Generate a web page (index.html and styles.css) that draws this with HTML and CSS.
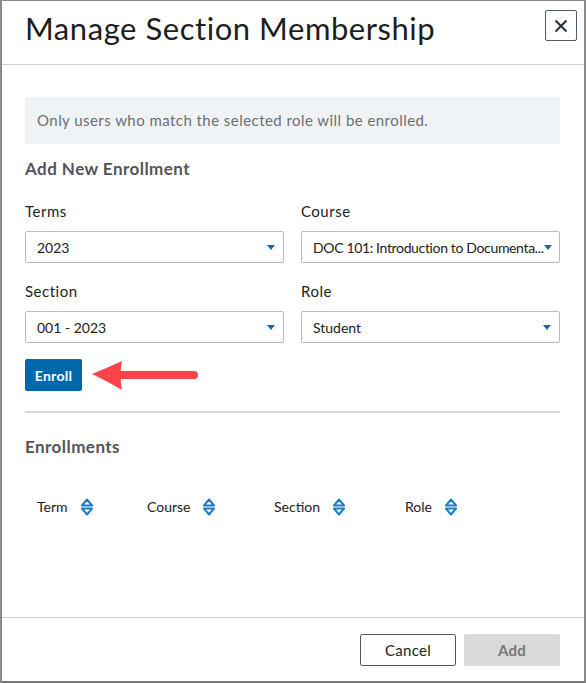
FILE: index.html
```html
<!DOCTYPE html>
<html>
<head>
<meta charset="utf-8">
<link rel="stylesheet" href="styles.css">
</head>
<body>
<div class="modal">
  <header class="modal-header">
    <h1 class="title">Manage Section Membership</h1>
    <button class="close" aria-label="Close">
      <svg width="16" height="16" viewBox="0 0 16 16"><path d="M2.5 2.5 L13.5 13.5 M13.5 2.5 L2.5 13.5" stroke="#22313f" stroke-width="2" fill="none"/></svg>
    </button>
  </header>
  <main class="modal-body">
    <div class="info">Only users who match the selected role will be enrolled.</div>
    <h2 class="heading first">Add New Enrollment</h2>
    <div class="form-grid">
      <div class="field">
        <label>Terms</label>
        <div class="select"><span class="val">2023</span><span class="caret"></span></div>
      </div>
      <div class="field">
        <label>Course</label>
        <div class="select narrow"><span class="val tight">DOC 101: Introduction to Documenta...</span><span class="caret"></span></div>
      </div>
      <div class="field">
        <label>Section</label>
        <div class="select"><span class="val">001 - 2023</span><span class="caret"></span></div>
      </div>
      <div class="field">
        <label>Role</label>
        <div class="select"><span class="val">Student</span><span class="caret"></span></div>
      </div>
    </div>
    <div class="enroll-row">
      <button class="btn-primary">Enroll</button>
      <svg class="arrow" width="110" height="32" viewBox="0 0 110 32">
        <line x1="26" y1="15" x2="102" y2="15" stroke="#fb434a" stroke-width="8" stroke-linecap="round"/>
        <path d="M0 14 Q15 8 30 1 Q27 15 30 30 Q15 21 0 14 Z" fill="#fb434a"/>
      </svg>
    </div>
    <hr class="divider">
    <h2 class="heading">Enrollments</h2>
    <div class="table-head">
      <div class="th">Term<svg class="sort" width="14" height="20" viewBox="0 0 14 20"><path d="M2 8.5 L7 2.5 L12 8.5 Z M2 11.5 L7 17.5 L12 11.5 Z" fill="none" stroke="#1d7ec6" stroke-width="2" stroke-linejoin="round"/></svg></div>
      <div class="th">Course<svg class="sort" width="14" height="20" viewBox="0 0 14 20"><path d="M2 8.5 L7 2.5 L12 8.5 Z M2 11.5 L7 17.5 L12 11.5 Z" fill="none" stroke="#1d7ec6" stroke-width="2" stroke-linejoin="round"/></svg></div>
      <div class="th">Section<svg class="sort" width="14" height="20" viewBox="0 0 14 20"><path d="M2 8.5 L7 2.5 L12 8.5 Z M2 11.5 L7 17.5 L12 11.5 Z" fill="none" stroke="#1d7ec6" stroke-width="2" stroke-linejoin="round"/></svg></div>
      <div class="th">Role<svg class="sort" width="14" height="20" viewBox="0 0 14 20"><path d="M2 8.5 L7 2.5 L12 8.5 Z M2 11.5 L7 17.5 L12 11.5 Z" fill="none" stroke="#1d7ec6" stroke-width="2" stroke-linejoin="round"/></svg></div>
    </div>
  </main>
  <footer class="modal-footer">
    <button class="btn-outline">Cancel</button>
    <button class="btn-disabled">Add</button>
  </footer>
</div>
</body>
</html>
```
FILE: styles.css
```css
* { box-sizing: border-box; }
html, body { margin: 0; padding: 0; background: #fff; }
body { font-family: Lato, "Open Sans", Arial, sans-serif; color: #222; }

.modal {
  width: 586px;
  height: 683px;
  border-top: 1px solid #8a8a8a;
  border-left: 2px solid #8a8a8a;
  border-right: 2px solid #8a8a8a;
  border-bottom: 2px solid #7a7a7a;
  display: flex;
  flex-direction: column;
  background: #fff;
}

.modal-header {
  height: 64px;
  border-bottom: 1px solid #cfcfcf;
  display: flex;
  align-items: flex-start;
  justify-content: space-between;
  padding: 0 7px 0 23px;
}
.title {
  margin: 8px 0 0 0;
  font-size: 31px;
  font-weight: 400;
  line-height: 38px;
  color: #1e1e1e;
  letter-spacing: 0.55px;
}
.close {
  margin-top: 9px;
  width: 32px;
  height: 31px;
  border: 1px solid #4b5e70;
  border-radius: 2px;
  background: #fff;
  padding: 0;
  display: flex;
  align-items: center;
  justify-content: center;
}

.modal-body {
  flex: 1;
  padding: 32px 24px 0 23px;
}
.info {
  height: 47px;
  background: #f0f3f6;
  color: #6e6e6e;
  font-size: 15px;
  line-height: 47px;
  padding-left: 12px;
  letter-spacing: 0.45px;
}
.heading {
  margin: 0;
  font-size: 17px;
  font-weight: 700;
  line-height: 20px;
  color: #555;
  letter-spacing: 0.45px;
}
.heading.first { margin-top: 15px; }

.form-grid {
  margin-top: 22px;
  display: grid;
  grid-template-columns: 259px 259px;
  column-gap: 17px;
  row-gap: 18px;
}
.field label {
  display: block;
  font-size: 15px;
  line-height: 20px;
  color: #222;
  margin-bottom: 10px;
  letter-spacing: 0.5px;
}
.select {
  height: 32px;
  border: 1px solid #bcbcbc;
  border-radius: 2px;
  display: flex;
  align-items: center;
  justify-content: space-between;
  padding: 0 8px 0 11px;
  font-size: 14px;
  color: #222;
}
.select.narrow { padding-right: 7px; }
.select .val { white-space: nowrap; overflow: hidden; }
.select .val.tight { letter-spacing: -0.35px; }
.caret {
  flex: none;
  width: 0;
  height: 0;
  border-left: 4px solid transparent;
  border-right: 4px solid transparent;
  border-top: 5px solid #1a66a8;
}

.enroll-row {
  margin-top: 16px;
  display: flex;
  align-items: flex-start;
  gap: 10px;
}
.btn-primary {
  height: 32px;
  width: 57px;
  background: #0067ac;
  color: #fff;
  border: none;
  border-radius: 2px;
  font-family: inherit;
  font-size: 14px;
  font-weight: 700;
  padding: 0;
  letter-spacing: 0.3px;
}
.arrow { margin-top: 1px; }

.divider {
  margin: 19px 0 0 0;
  border: none;
  height: 2px;
  background: #d6d6d6;
}
.divider + .heading { margin-top: 24px; }

.table-head {
  margin-top: 40px;
  display: grid;
  grid-template-columns: 110px 127px 131px 1fr;
}
.th {
  display: flex;
  align-items: center;
  padding-left: 12px;
  font-size: 14px;
  line-height: 20px;
  color: #222;
  gap: 12px;
}

.modal-footer {
  height: 64px;
  border-top: 1px solid #cfcfcf;
  display: flex;
  justify-content: flex-end;
  align-items: flex-start;
  padding: 16px 24px 0 0;
  gap: 8px;
}
.btn-outline, .btn-disabled {
  width: 96px;
  height: 32px;
  border-radius: 2px;
  font-family: inherit;
  font-size: 15px;
  padding: 0;
  letter-spacing: 0.3px;
}
.btn-outline {
  background: #fff;
  border: 1px solid #4b5e70;
  color: #222;
}
.btn-disabled {
  background: #d9d9d9;
  border: none;
  color: #777;
  font-weight: 700;
}
```
